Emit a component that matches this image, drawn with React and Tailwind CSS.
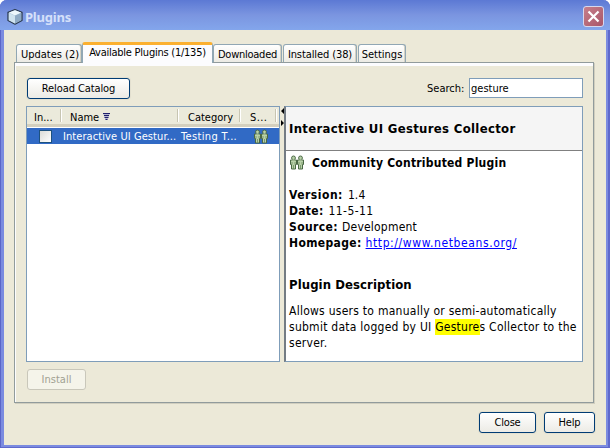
import React from "react";

function Cube() {
  return (
    <svg width="16" height="18" viewBox="0 0 16 18" className="shrink-0">
      <path d="M8 1.500 15 4.300V12.500L8 16.200 1 12.500V4.300Z" fill="#a9c3d9" stroke="#2b3b52" strokeWidth="1.300" strokeLinejoin="round" />
      <path d="M8 2.200 14.200 4.600 8 7.400 1.800 4.600Z" fill="#edf7fc" />
      <path d="M1.800 5 8 7.800V15.400L1.800 12.200Z" fill="#cfe3ef" />
      <path d="M14.200 5 8 7.800V15.400L14.200 12.200Z" fill="#8eaac4" />
    </svg>
  );
}

function People() {
  return (
    <svg width="16" height="15" viewBox="0 0 16 15" className="shrink-0">
      {[0, 7].map((x) => (
        <g key={x} transform={`translate(${x} 0)`}>
          <path d="M1.500 5H7.500V9.500H6.500V14H2.500V9.500H1.500Z" fill="#b9d2a9" stroke="#4a6844" strokeLinejoin="round" />
          <circle cx="4.500" cy="2.900" r="1.900" fill="#b9d2a9" stroke="#4a6844" />
          <path d="M3.300 5H5.700" stroke="#b9d2a9" strokeWidth="1.200" />
          <path d="M4.500 10V14M3 7V9.500M6 7V9.500" stroke="#6c8a60" strokeWidth=".8" />
        </g>
      ))}
    </svg>
  );
}

function Button({ className, children }) {
  return (
    <button className={`flex h-[21px] shrink-0 items-center justify-center rounded-[3px] border border-[#003c74] bg-linear-to-b from-white to-[#ecebe5] shadow-[0_0_0_1px_#e3e0d0] ${className}`}>
      {children}
    </button>
  );
}

function Tab({ className, children }) {
  return (
    <div className={`mb-px flex h-[18px] shrink-0 items-center justify-center whitespace-nowrap rounded-t-[3px] border border-b-0 border-[#91a7b4] bg-linear-to-b from-white to-[#ecebe4] pt-[2px] shadow-[inset_-1px_0_#d5d2c4] ${className}`}>
      {children}
    </div>
  );
}

function HeaderCell({ className, children }) {
  return (
    <div className={`flex h-[20px] shrink-0 items-center border-b-[3px] border-[#d4d0be] ${className}`}>
      <span className="flex flex-1 items-center whitespace-nowrap pt-[4px]">{children}</span>
      <i className="h-[13px] w-[2px] border-l border-[#c7c5b2] bg-white" />
    </div>
  );
}

export default function App() {
  return (
    <div className="flex h-[448px] w-[610px] flex-col overflow-hidden rounded-t-[7px] bg-[#7b8be0] font-['DejaVu_Sans_Condensed','DejaVu_Sans',sans-serif] text-[11px] leading-[14px] text-black shadow-[inset_1px_0_#5c66c8,inset_-2px_-1px_#5f69cc] [font-stretch:condensed]">
      <header className="flex h-[30px] shrink-0 items-center bg-linear-to-b from-[#5c79d4] via-[#7b95e0] to-[#83a6ec] pl-[7px] pr-[6px] pt-[3px]">
        <Cube />
        <span className="ml-[2px] flex-1 font-['Noto_Sans'] text-[13px] font-bold tracking-[-0.2px] text-[#d5e0fa]">Plugins</span>
        <div className="flex h-[21px] w-[21px] items-center justify-center rounded-[3px] border border-[#d7d8ed] bg-linear-to-br from-[#c67f8b] to-[#a95669]">
          <svg width="13" height="13" viewBox="0 0 13 13" className="shrink-0"><path d="M1.500 1.500 11.500 11.500M11.500 1.500 1.500 11.500" stroke="white" strokeWidth="2.200" /></svg>
        </div>
      </header>
      <main className="mx-[4px] mb-[3px] flex flex-1 flex-col bg-[#ece9d8] pl-[10px] pr-[11px] pt-[12px]">
        <nav className="z-10 -mb-px flex h-[21px] items-end pl-[2px]">
          <Tab className="w-[66px] pl-[2px]">Updates (2)</Tab>
          <div className="flex h-[21px] w-[131px] shrink-0 items-center justify-center whitespace-nowrap rounded-t-[3px] border-x border-t-[3px] border-x-[#91a7b4] border-t-[#fbb030] bg-[#fcfcfe] pb-[3px] tracking-[-0.24px]">Available Plugins (1/135)</div>
          <Tab className="w-[69px] tracking-[-0.25px]">Downloaded</Tab>
          <Tab className="ml-px w-[74px] tracking-[-0.1px]">Installed (38)</Tab>
          <Tab className="ml-px w-[48px]">Settings</Tab>
        </nav>
        <section className="h-[341px] w-[580px] shrink-0 border border-[#919b9c] bg-[#ece9d8] pl-[11px] shadow-[inset_0_3px_#fcfcfe,inset_1px_0_#fcfcfe,1px_1px_#d0cebf]">
          <div className="flex h-[43px] items-start pt-[15px]">
            <Button className="ml-px w-[103px] tracking-[-0.1px]">Reload Catalog</Button>
            <span className="ml-[297px] w-[42px] pt-[4px]">Search:</span>
            <div className="h-[20px] w-[114px] border border-[#7f9db9] bg-white pl-[1px] pt-[3px]">gesture</div>
          </div>
          <div className="flex h-[256px]">
            <div className="w-[254px] shrink-0 border border-[#7f9db9] bg-white">
              <div className="flex bg-[#ebeadb]">
                <HeaderCell className="w-[35px] pl-[7px]">In...</HeaderCell>
                <HeaderCell className="w-[117px] pl-[8px]">Name
                  <svg width="9" height="8" viewBox="0 0 9 8" className="mb-[2px] ml-[3px]"><path d="M1 0H8L5.500 7H3.500Z" fill="#b4b5cf" /><path d="M1 .5H8M2 2.500H7M2.500 4.500H6.500M3.500 6.500H5.500" stroke="#20206c" /></svg>
                </HeaderCell>
                <HeaderCell className="w-[62px] pl-[9px]">Category</HeaderCell>
                <HeaderCell className="w-[38px] pl-[9px] pr-[2px] tracking-[0.4px]">S...</HeaderCell>
              </div>
              <div className="mt-px flex h-[16px] items-center bg-[#316ac5] text-white">
                <i className="ml-[12px] h-[13px] w-[13px] border border-[#1c5180] bg-linear-to-br from-[#dcdcd7] to-white" />
                <span className="ml-[11px] w-[118px] whitespace-nowrap pt-[2px] tracking-[0.08px]">Interactive UI Gestur...</span>
                <span className="w-[72px] whitespace-nowrap pt-[2px] tracking-[0.35px]">Testing T...</span>
                <People />
              </div>
            </div>
            <div className="w-[4px] shrink-0 pt-[2px]">
              <svg width="4" height="20" viewBox="0 0 4 20"><path d="M4 0V6L1 3ZM1 12V18L4 15Z" fill="black" /></svg>
            </div>
            <article className="w-[299px] shrink-0 border border-l-2 border-[#7f9db9] border-l-[#747c84] bg-white text-[12px] leading-[16px]">
              <h1 className="flex h-[44px] items-center border-b border-[#808080] bg-[#f5f5f5] pl-[3px] pt-[1px] text-[13px] font-bold tracking-[0.32px]">Interactive UI Gestures Collector</h1>
              <div className="pl-[3px]">
                <div className="flex h-[23px] items-center"><People /><b className="ml-[7px] tracking-[0.23px]">Community Contributed Plugin</b></div>
                <div className="mt-[13px] whitespace-nowrap">
                  <p className="flex gap-[5px]"><b className="tracking-[0.5px]">Version:</b><span className="tracking-[0.1px]">1.4</span></p>
                  <p className="flex gap-[5px]"><b className="tracking-[0.3px]">Date:</b><span className="tracking-[0.4px]">11-5-11</span></p>
                  <p className="flex gap-[4px]"><b className="tracking-[0.4px]">Source:</b><span className="tracking-[0.2px]">Development</span></p>
                  <p className="flex gap-[4px]"><b className="tracking-[0.35px]">Homepage:</b><span className="tracking-[0.6px] text-[#0000ff] underline">http://www.netbeans.org/</span></p>
                </div>
                <h2 className="mt-[26px] text-[13px] font-bold tracking-[0.08px]">Plugin Description</h2>
                <div className="mt-[10px] whitespace-nowrap tracking-[0.26px]">
                  <p>Allows users to manually or semi-automatically</p>
                  <p>submit data logged by UI <mark className="inline-block h-[16px] bg-[#ffff00] align-top">Gesture</mark>s Collector to the</p>
                  <p>server.</p>
                </div>
              </div>
            </article>
          </div>
          <button className="ml-px mt-[7px] flex h-[21px] w-[59px] items-center justify-center rounded-[3px] border border-[#c9c7ba] bg-[#f5f4ea] text-[#a1a192]">Install</button>
        </section>
        <footer className="mt-[9px] flex justify-end gap-[8px]">
          <Button className="w-[57px] tracking-[-0.2px]">Close</Button>
          <Button className="w-[51px] tracking-[-0.2px]">Help</Button>
        </footer>
      </main>
    </div>
  );
}
